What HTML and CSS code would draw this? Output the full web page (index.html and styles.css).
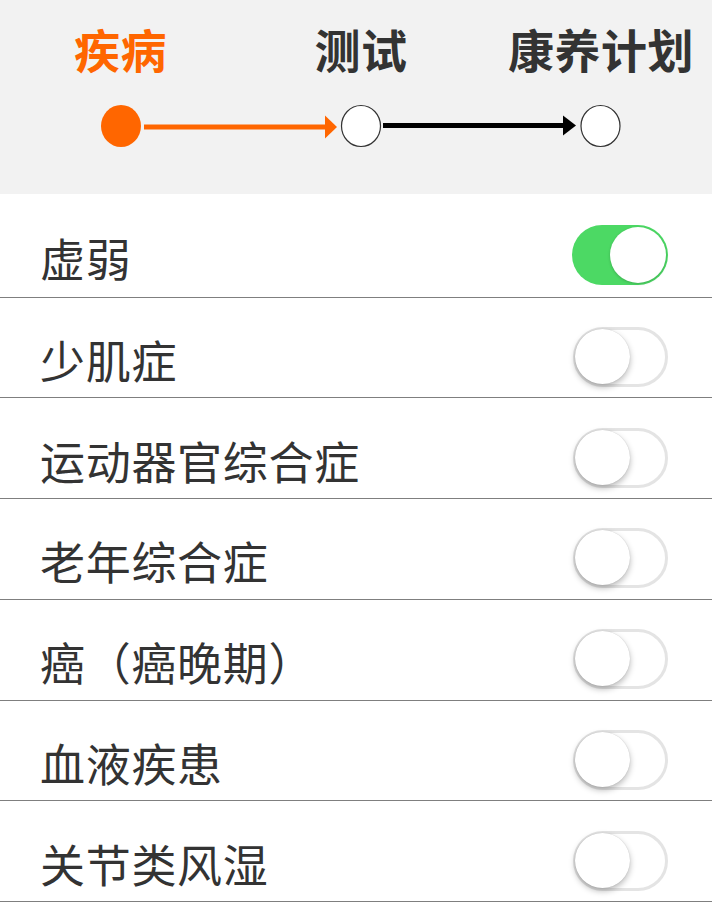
FILE: index.html
```html
<!DOCTYPE html>
<html lang="zh-CN">
<head>
<meta charset="utf-8">
<title>疾病</title>
<link rel="stylesheet" href="styles.css">
</head>
<body>
<header class="steps">
  <div class="labels">
    <div class="label active">疾病</div>
    <div class="label">测试</div>
    <div class="label">康养计划</div>
  </div>
  <svg class="track" width="712" height="60" viewBox="0 0 712 60">
    <rect x="144" y="24.5" width="182" height="5" fill="#ff6600"/>
    <polygon points="325,15.5 337,27 325,38.5" fill="#ff6600"/>
    <ellipse cx="121" cy="26" rx="20" ry="21" fill="#ff6600"/>
    <rect x="383" y="23" width="182" height="5" fill="#000"/>
    <polygon points="563,15.5 576,25.5 563,35.5" fill="#000"/>
    <ellipse cx="361" cy="26" rx="19.5" ry="20.5" fill="#fff" stroke="#333" stroke-width="1.2"/>
    <ellipse cx="600.5" cy="26" rx="19.5" ry="20.5" fill="#fff" stroke="#333" stroke-width="1.2"/>
  </svg>
</header>
<ul class="list">
  <li class="row first"><span class="name">虚弱</span><span class="switch on"><span class="knob"></span></span></li>
  <li class="row"><span class="name">少肌症</span><span class="switch"><span class="knob"></span></span></li>
  <li class="row"><span class="name">运动器官综合症</span><span class="switch"><span class="knob"></span></span></li>
  <li class="row"><span class="name">老年综合症</span><span class="switch"><span class="knob"></span></span></li>
  <li class="row"><span class="name">癌（癌晚期）</span><span class="switch"><span class="knob"></span></span></li>
  <li class="row"><span class="name">血液疾患</span><span class="switch"><span class="knob"></span></span></li>
  <li class="row"><span class="name">关节类风湿</span><span class="switch"><span class="knob"></span></span></li>
</ul>
</body>
</html>
```
FILE: styles.css
```css
html, body {
  margin: 0;
  padding: 0;
  background: #fff;
  overflow: hidden;
}
body {
  width: 712px;
  font-family: "Noto Sans CJK SC", "Noto Sans", sans-serif;
  color: #333;
}
.steps {
  background: #f2f2f2;
  height: 194px;
  box-sizing: border-box;
  padding-top: 15px;
}
.labels {
  display: grid;
  grid-template-columns: 241px 240px 240px;
  width: 721px;
}
.label {
  text-align: center;
  font-size: 46px;
  font-weight: 700;
  line-height: 66px;
  color: #333;
  white-space: nowrap;
  letter-spacing: 0.5px;
}
.label.active {
  color: #ff6600;
}
.track {
  display: block;
  margin-top: 19px;
}
.list {
  list-style: none;
  margin: 0;
  padding: 0;
}
.row {
  display: flex;
  align-items: center;
  justify-content: space-between;
  height: 100.8px;
  box-sizing: border-box;
  padding: 19px 44px 0 40px;
  border-bottom: 1px solid #7f7f7f;
}
.row.first {
  height: 103.5px;
  padding-top: 19px;
}
.name {
  font-size: 45px;
  line-height: 60px;
  padding-top: 6px;
  color: #333;
  letter-spacing: 0.7px;
}
.switch {
  position: relative;
  display: block;
  width: 95px;
  height: 60px;
  box-sizing: border-box;
  border-radius: 30px;
  border: 3px solid #e4e4e4;
  background: #fff;
  flex: none;
}
.switch .knob {
  position: absolute;
  left: -1px;
  top: -1px;
  width: 55px;
  height: 55px;
  border-radius: 50%;
  background: #fff;
  box-shadow: 0 3px 6px rgba(0, 0, 0, 0.28), 0 0 1px rgba(0, 0, 0, 0.2);
}
.switch.on {
  width: 96px;
  background: #4cd964;
  border: none;
}
.switch.on .knob {
  left: auto;
  right: 2px;
  top: 2px;
  width: 56px;
  height: 56px;
  box-shadow: 0 1px 3px rgba(0, 0, 0, 0.2);
}
```
